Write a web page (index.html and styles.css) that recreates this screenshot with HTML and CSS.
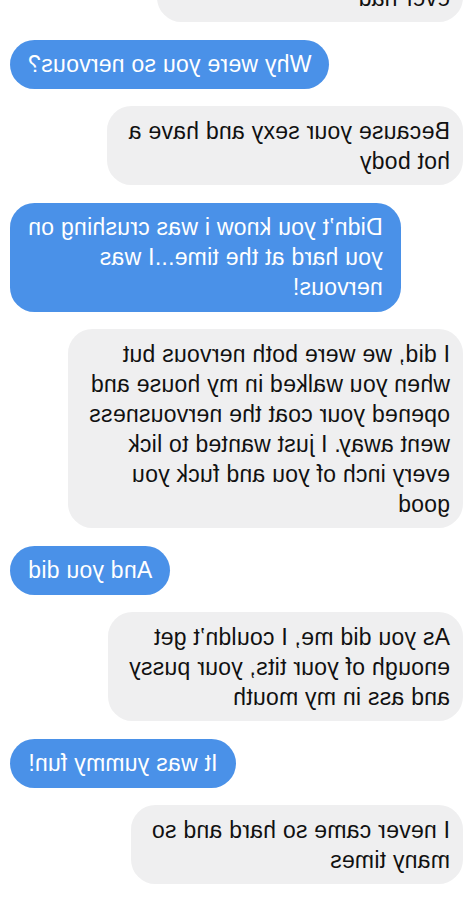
FILE: index.html
```html
<!DOCTYPE html>
<html lang="en">
<head>
<meta charset="utf-8">
<title>Messages</title>
<link rel="stylesheet" href="styles.css">
</head>
<body>
<div class="thread">
  <div class="bubble in first">ever had</div>
  <div class="bubble out">Why were you so nervous?</div>
  <div class="bubble in">Because your sexy and have a<br>hot body</div>
  <div class="bubble out">Didn’t you know i was crushing on<br>you hard at the time...I was<br>nervous!</div>
  <div class="bubble in">I did, we were both nervous but<br>when you walked in my house and<br>opened your coat the nervousness<br>went away. I just wanted to lick<br>every inch of you and fuck you<br>good</div>
  <div class="bubble out">And you did</div>
  <div class="bubble in">As you did me, I couldn’t get<br>enough of your tits, your pussy<br>and ass in my mouth</div>
  <div class="bubble out">It was yummy fun!</div>
  <div class="bubble in">I never came so hard and so<br>many times</div>
</div>
</body>
</html>
```
FILE: styles.css
```css
html, body {
  margin: 0;
  padding: 0;
  background: #ffffff;
  overflow: hidden;
}
body {
  width: 464px;
  height: 900px;
}
.thread {
  display: flex;
  flex-direction: column;
  gap: 17.5px;
  transform: scaleX(-1);
  font-family: "Liberation Sans", Arial, sans-serif;
  font-size: 23px;
  line-height: 30px;
  letter-spacing: 0.25px;
}
.bubble {
  white-space: nowrap;
  padding: 9.5px 18px;
  border-radius: 24.5px;
  max-width: 400px;
}
.in {
  align-self: flex-start;
  margin-left: 1px;
  padding-left: 13px;
  padding-right: 21px;
  background: #efeff0;
  color: #111111;
}
.out {
  align-self: flex-end;
  margin-right: 10px;
  background: #4a91e8;
  color: #ffffff;
}
.first {
  margin-top: -27px;
  width: 272px;
}
```
